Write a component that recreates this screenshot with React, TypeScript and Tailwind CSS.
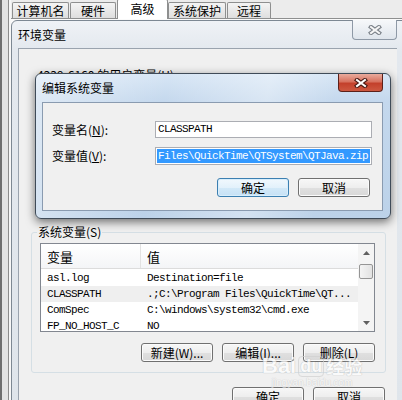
import React from "react";

const CJK = "font-['Noto_Sans_CJK_SC',sans-serif]";
const MONO = "font-['Liberation_Mono','Noto_Sans_CJK_SC',monospace] text-[11px] tracking-[-0.6px]";

function XGlyph({ outline, fill }: { outline: string; fill: string }) {
  return (
    <svg width="14" height="10" viewBox="0 0 14 10">
      <path d="M3 2 L11 8 M11 2 L3 8" stroke={outline} strokeWidth="4.2" strokeLinecap="square" fill="none" />
      <path d="M3 2 L11 8 M11 2 L3 8" stroke={fill} strokeWidth="2" strokeLinecap="square" fill="none" />
    </svg>
  );
}

function Btn({ children, focused = false }: { children: React.ReactNode; focused?: boolean }) {
  return (
    <div
      className={`flex h-[19px] w-[72px] shrink-0 items-center justify-center rounded-[3px] border text-[12px] leading-none text-black ${
        focused
          ? "border-[#3c7fb1] bg-[linear-gradient(#f1f8fd_0%,#e3f1fb_50%,#d3e9f8_50%,#c6e1f5_100%)] shadow-[inset_0_0_0_1px_#d8eefc]"
          : "border-[#707070] bg-[linear-gradient(#f7f7f7_0%,#eeeeee_50%,#e0e0e0_50%,#d8d8d8_100%)] shadow-[inset_0_0_0_1px_#fbfbfb]"
      }`}
    >
      {children}
    </div>
  );
}

function Tri({ up }: { up: boolean }) {
  return (
    <svg width="7" height="4" viewBox="0 0 7 4">
      <path d={up ? "M0 4 L3.5 0 L7 4 Z" : "M0 0 L3.5 4 L7 0 Z"} fill="#606060" />
    </svg>
  );
}

const rows: [string, string, boolean][] = [
  ["asl.log", "Destination=file", false],
  ["CLASSPATH", ".;C:\\Program Files\\QuickTime\\QT...", true],
  ["ComSpec", "C:\\windows\\system32\\cmd.exe", false],
  ["FP_NO_HOST_C", "NO", false],
];

export default function App() {
  return (
    <div className={`relative flex h-[400px] w-[402px] overflow-hidden bg-[#f0f0f0] text-black ${CJK}`}>
      {/* left frame of the background window */}
      <div className="flex h-full w-[11px] shrink-0">
        <div className="w-[2px] bg-[#6f6f6f]" />
        <div className="w-[6px] bg-[#e3e3e3]" />
        <div className="w-[1px] bg-[#8c8c8c]" />
        <div className="w-[2px] bg-[#f7f7f7]" />
      </div>

      {/* background window: tabs */}
      <div className="flex flex-1 flex-col">
        <div className="flex h-[19px] shrink-0 items-end border-b border-[#8e8f8f] bg-[#ececec] pl-[1px]">
          <div className="flex h-[16px] w-[57px] items-center justify-center rounded-t-[2px] border border-b-0 border-[#8e8f8f] bg-[linear-gradient(#f4f4f4,#dedede)] text-[12px] leading-none">计算机名</div>
          <div className="ml-[1px] flex h-[16px] w-[46px] items-center justify-center rounded-t-[2px] border border-b-0 border-[#8e8f8f] bg-[linear-gradient(#f4f4f4,#dedede)] text-[12px] leading-none">硬件</div>
          <div className="relative -mb-[1px] ml-[1px] flex h-[20px] w-[51px] items-start justify-center rounded-t-[2px] border border-b-0 border-[#8e8f8f] bg-white pt-[3px] text-[12px] leading-none">高级</div>
          <div className="flex h-[16px] w-[58px] items-center justify-center rounded-t-[2px] border border-b-0 border-[#8e8f8f] bg-[linear-gradient(#f4f4f4,#dedede)] text-[12px] leading-none">系统保护</div>
          <div className="ml-[1px] flex h-[16px] w-[44px] items-center justify-center rounded-t-[2px] border border-b-0 border-[#8e8f8f] bg-[linear-gradient(#f4f4f4,#dedede)] text-[12px] leading-none">远程</div>
        </div>
        <div className="flex-1 bg-[#fafafa]" />
      </div>

      {/* 环境变量 dialog (inactive) */}
      <div className="absolute left-[11px] top-[20px] flex h-[392px] w-[398px] flex-col rounded-tl-[6px] border border-[#7d8893] bg-[linear-gradient(#eff2f6,#e3e8ee_30px,#dfe5eb)]">
        <div className="flex h-[27px] shrink-0 items-start">
          <span className="ml-[6px] self-center text-[12px] leading-[14px]">环境变量</span>
          <div className="-mt-[1px] ml-auto mr-[11px] flex h-[20px] w-[45px] items-center justify-center rounded-b-[4px] border border-t-0 border-[#8e99a6] bg-[linear-gradient(#f6f8fa,#dfe5ec)]">
            <XGlyph outline="#7a8088" fill="#f6f6f6" />
          </div>
        </div>
        <div className="mb-[-10px] ml-[6px] mr-[11px] flex flex-1 flex-col border-l border-t border-[#9aa3ae] bg-[#f0f0f0]">
          <div className="ml-[18px] mt-[19px] text-[12px] leading-[14px]">4239-6160 的用户变量(U)</div>

          <fieldset className="ml-[12px] mt-[142px] h-[149px] w-[355px] rounded-[3px] border border-[#d5dfe5]">
            <legend className="ml-[5px] px-[1px] text-[12px] leading-[16px]">系统变量(S)</legend>
            <div className="ml-[8px] mt-[3px] flex h-[89px] w-[335px] overflow-hidden border border-[#828790] bg-white">
              <div className="flex min-w-0 flex-1 flex-col">
                <div className="flex h-[25px] shrink-0 border-b border-[#dcdcdc] bg-[linear-gradient(#ffffff,#f4f5f7)] text-[13px] leading-none">
                  <div className="flex w-[100px] items-center border-r border-[#e2e2e2] pl-[6px]">变量</div>
                  <div className="flex items-center pl-[6px]">值</div>
                </div>
                <div className="pt-[1px]">
                  {rows.map(([n, v, sel]) => (
                    <div key={n} className={`flex h-[16px] items-center whitespace-nowrap ${MONO} ${sel ? "bg-[#efefef]" : ""}`}>
                      <div className="w-[100px] shrink-0 pl-[6px]">{n}</div>
                      <div className="pl-[6px]">{v}</div>
                    </div>
                  ))}
                </div>
              </div>
              <div className="flex w-[16px] shrink-0 flex-col items-center bg-[#f4f4f4]">
                <div className="flex h-[17px] w-full items-center justify-center"><Tri up /></div>
                <div className="mt-[3px] h-[15px] w-[14px] rounded-[2px] border border-[#959595] bg-[linear-gradient(90deg,#f4f4f4,#e2e2e2)]" />
                <div className="flex-1" />
                <div className="flex h-[17px] w-full items-center justify-center"><Tri up={false} /></div>
              </div>
            </div>
            <div className="mt-[11px] flex justify-end gap-[9px] pr-[10px]">
              <Btn>新建(W)...</Btn>
              <Btn>编辑(I)...</Btn>
              <Btn>删除(L)</Btn>
            </div>
          </fieldset>

          <div className="mt-[14px] flex justify-end gap-[9px] pr-[12px]">
            <Btn>确定</Btn>
            <Btn>取消</Btn>
          </div>
        </div>
      </div>

      {/* 编辑系统变量 dialog (active) */}
      <div className="absolute left-[35px] top-[73px] flex h-[146px] w-[356px] flex-col rounded-[6px] border border-[#3f4b58] bg-[linear-gradient(100deg,rgba(255,255,255,0.45)_0%,rgba(255,255,255,0)_35%,rgba(255,255,255,0.35)_62%,rgba(255,255,255,0)_80%),linear-gradient(#d7e6f5,#c4d8ed_28px,#bcd2e9)] shadow-[0_3px_10px_rgba(0,0,0,0.55)]">
        <div className="flex h-[28px] shrink-0 items-start">
          <span className="ml-[6px] self-center text-[12px] leading-[14px]">编辑系统变量</span>
          <div className="ml-auto mr-[7px] flex h-[18px] w-[45px] items-center justify-center rounded-b-[4px] border border-t-0 border-[#5c2019] bg-[linear-gradient(#e9ab9d,#d7725f_45%,#c3402b_55%,#cd5840)]">
            <XGlyph outline="#4a1a14" fill="#ffffff" />
          </div>
        </div>
        <div className="mb-[7px] ml-[6px] mr-[7px] flex flex-1 flex-col border border-[#8a9bb0] bg-[#f0f0f0]">
          <div className="mt-[18px] flex h-[17px] items-center">
            <div className="w-[112px] shrink-0 pl-[9px] text-[12px] leading-none">
              变量名(<span className="underline">N</span>):
            </div>
            <div className={`flex h-[17px] w-[217px] items-center border border-[#abadb3] bg-white pl-[2px] ${MONO}`}>CLASSPATH</div>
          </div>
          <div className="mt-[9px] flex h-[18px] items-center">
            <div className="w-[112px] shrink-0 pl-[9px] text-[12px] leading-none">
              变量值(<span className="underline">V</span>):
            </div>
            <div className="flex h-[18px] w-[217px] items-stretch border border-[#abadb3] bg-white p-[1px]">
              <div className={`flex flex-1 items-center overflow-hidden whitespace-nowrap bg-[#3399ff] pl-[1px] text-white ${MONO}`}>
                Files\QuickTime\QTSystem\QTJava.zip
              </div>
            </div>
          </div>
          <div className="mt-[13px] flex justify-end gap-[9px] pr-[12px]">
            <Btn focused>确定</Btn>
            <Btn>取消</Btn>
          </div>
        </div>
      </div>

      {/* watermark */}
      <div className="pointer-events-none absolute left-[262px] top-[355px] flex flex-col items-center text-white opacity-70 [text-shadow:0_0_1px_#b4b4b4,0_0_1px_#b4b4b4]">
        <div className="flex items-center gap-[2px] font-['Liberation_Sans',sans-serif] text-[22px] font-bold leading-[22px]">
          <span>Bai</span>
          <span className="rounded-[4px] border border-[#d0d0d0] px-[1px] text-[18px] leading-[19px]">du</span>
          <span className={`${CJK} text-[18px]`}>经验</span>
        </div>
        <div className="font-['Liberation_Sans',sans-serif] text-[10px] leading-[12px] opacity-80">jingyan.baidu.com</div>
      </div>
    </div>
  );
}
